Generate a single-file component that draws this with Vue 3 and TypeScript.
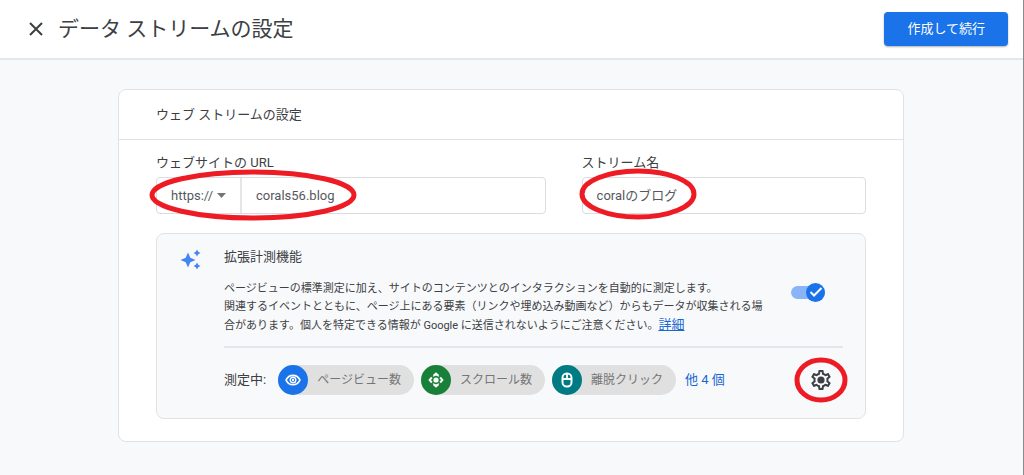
<script setup lang="ts">
import { ref } from 'vue'

interface Metric {
  label: string
  kind: 'view' | 'scroll' | 'click'
}

const protocol = ref('https://')
const siteUrl = ref('corals56.blog')
const streamName = ref('coralのブログ')
const enhanced = ref(true)

const metrics: Metric[] = [
  { label: 'ページビュー数', kind: 'view' },
  { label: 'スクロール数', kind: 'scroll' },
  { label: '離脱クリック', kind: 'click' },
]
</script>

<template>
  <div class="page">
    <header class="topbar">
      <button class="close" type="button" aria-label="閉じる">
        <svg width="14" height="14" viewBox="0 0 14 14">
          <path d="M1 1l12 12M13 1L1 13" fill="none" stroke="#3c4043" stroke-width="2" />
        </svg>
      </button>
      <h1>データ ストリームの設定</h1>
      <button class="submit" type="button">作成して続行</button>
    </header>

    <main class="card">
      <h2>ウェブ ストリームの設定</h2>
      <div class="body">
        <div class="fields">
          <div class="field url">
            <label for="site-url">ウェブサイトの URL</label>
            <div class="box">
              <div class="protocol">
                <select v-model="protocol" aria-label="プロトコル">
                  <option>https://</option>
                  <option>http://</option>
                </select>
                <svg width="9" height="5" viewBox="0 0 9 5"><path d="M0 0h9L4.500 5z" fill="#757575" /></svg>
              </div>
              <input id="site-url" v-model="siteUrl" type="text" />
              <svg class="ring ring-url" width="208" height="54" viewBox="0 0 208 54">
                <ellipse cx="104" cy="27" rx="101" ry="23" />
              </svg>
            </div>
          </div>
          <div class="field name">
            <label for="stream-name">ストリーム名</label>
            <div class="box">
              <input id="stream-name" v-model="streamName" type="text" />
              <svg class="ring ring-name" width="118" height="52" viewBox="0 0 118 52">
                <ellipse cx="59" cy="26" rx="56" ry="23" />
              </svg>
            </div>
          </div>
        </div>

        <section class="panel">
          <svg class="spark" width="22" height="22" viewBox="0 0 22 22" fill="#4285f4">
            <path d="M8 3.500l2.300 5.200L15.500 11l-5.200 2.300L8 18.500l-2.300-5.200L.5 11l5.200-2.300z" />
            <path d="M17 .5l1.200 2.300L20.500 4l-2.300 1.200L17 7.500l-1.200-2.300L13.500 4l2.300-1.200zM17 13.500l1.200 2.300 2.300 1.200-2.300 1.200L17 20.500l-1.200-2.300-2.300-1.200 2.300-1.200z" />
          </svg>
          <div class="content">
            <h3 id="enhanced-title">拡張計測機能</h3>
            <div class="intro">
              <p>
                ページビューの標準測定に加え、サイトのコンテンツとのインタラクションを自動的に測定します。<br />
                関連するイベントとともに、ページ上にある要素（リンクや埋め込み動画など）からもデータが収集される場<br />
                合があります。個人を特定できる情報が Google に送信されないようにご注意ください。<a href="#">詳細</a>
              </p>
              <label class="switch">
                <input v-model="enhanced" type="checkbox" role="switch" aria-labelledby="enhanced-title" />
                <span class="thumb">
                  <svg width="14" height="12" viewBox="0 0 14 12">
                    <path d="M1.500 6l3.500 3.500L12.500 2" fill="none" stroke="#fff" stroke-width="2" />
                  </svg>
                </span>
              </label>
            </div>
            <div class="measuring">
              <span class="caption">測定中:</span>
              <ul>
                <li v-for="m in metrics" :key="m.kind">
                  <span class="badge" :class="m.kind">
                    <svg v-if="m.kind === 'view'" width="16" height="12" viewBox="0 0 16 12" fill="none" stroke="#fff">
                      <path d="M1 6C4-.3 12-.3 15 6C12 12.300 4 12.300 1 6z" stroke-width="1.700" />
                      <circle cx="8" cy="6" r="2.800" stroke-width="1.400" />
                      <circle cx="8" cy="6" r="1.200" fill="#fff" stroke="none" />
                    </svg>
                    <svg v-else-if="m.kind === 'scroll'" width="16" height="16" viewBox="0 0 16 16">
                      <path d="M5.500 3.800L8 1.600l2.500 2.200M12.200 5.500L14.400 8l-2.200 2.500M10.500 12.200L8 14.400l-2.500-2.200M3.800 10.500L1.600 8l2.200-2.500" fill="none" stroke="#fff" stroke-width="1.900" />
                      <path d="M4.800 4.800l1.500-1.300h3.400l1.500 1.300M4.800 11.200l1.500 1.300h3.400l1.500-1.300" fill="none" stroke="#fff" stroke-width=".8" />
                      <circle cx="8" cy="8" r="2.600" fill="#fff" />
                    </svg>
                    <svg v-else width="12" height="16" viewBox="0 0 12 16" fill="none" stroke="#fff">
                      <rect x="1.500" y="1.500" width="9" height="13" rx="4.200" stroke-width="2" />
                      <path d="M1.500 7h9M6 1.500V7" stroke-width="1.800" />
                    </svg>
                  </span>
                  <span class="chip-label">{{ m.label }}</span>
                </li>
              </ul>
              <a class="more" href="#">他 4 個</a>
              <button class="settings" type="button" aria-label="設定">
                <svg width="24" height="24" viewBox="0 0 24 24" fill="#3c4043">
                  <path d="M19.430 12.980c.04-.32.07-.64.07-.98 0-.34-.03-.66-.07-.98l2.110-1.650c.19-.15.24-.42.12-.64l-2-3.460c-.09-.16-.26-.25-.44-.25-.06 0-.12.01-.17.03l-2.490 1c-.52-.4-1.080-.73-1.690-.98l-.38-2.650C14.460 2.180 14.250 2 14 2h-4c-.25 0-.46.18-.49.42l-.38 2.650c-.61.25-1.170.59-1.690.98l-2.490-1c-.06-.02-.12-.03-.18-.03-.17 0-.34.09-.43.25l-2 3.460c-.13.22-.07.49.12.64l2.110 1.650c-.04.32-.07.65-.07.98 0 .33.03.66.07.98l-2.110 1.650c-.19.15-.24.42-.12.64l2 3.460c.09.16.26.25.44.25.06 0 .12-.01.17-.03l2.490-1c.52.4 1.080.73 1.690.98l.38 2.650c.03.24.24.42.49.42h4c.25 0 .46-.18.49-.42l.38-2.650c.61-.25 1.170-.59 1.690-.98l2.490 1c.06.02.12.03.18.03.17 0 .34-.09.43-.25l2-3.460c.12-.22.07-.49-.12-.64l-2.110-1.650zm-1.980-1.710c.04.31.05.52.05.73 0 .21-.02.43-.05.73l-.14 1.130.89.7 1.080.84-.7 1.210-1.270-.51-1.040-.42-.9.68c-.43.32-.84.56-1.250.73l-1.060.43-.16 1.130-.2 1.350h-1.400l-.19-1.350-.16-1.130-1.060-.43c-.43-.18-.83-.41-1.230-.71l-.91-.7-1.060.43-1.270.51-.7-1.210 1.080-.84.89-.7-.14-1.130c-.03-.31-.05-.54-.05-.74s.02-.43.05-.73l.14-1.130-.89-.7-1.080-.84.7-1.210 1.270.51 1.040.42.9-.68c.43-.32.84-.56 1.250-.73l1.060-.43.16-1.130.2-1.350h1.390l.19 1.350.16 1.130 1.060.43c.43.18.83.41 1.230.71l.91.7 1.060-.43 1.270-.51.7 1.210-1.070.85-.89.7.14 1.130z" />
                  <circle cx="12" cy="12" r="3.600" />
                </svg>
                <svg class="ring ring-gear" width="54" height="46" viewBox="0 0 54 46">
                  <ellipse cx="27" cy="23" rx="24" ry="20" />
                </svg>
              </button>
            </div>
          </div>
        </section>
      </div>
    </main>
  </div>
</template>

<style>
body {
  margin: 0;
}
</style>

<style scoped>
.page {
  box-sizing: border-box;
  min-height: 100vh;
  padding-bottom: 32px;
  border-right: 1px solid #8a8b8d;
  background: #f8f9fb;
  color: #3c4043;
  font-family: Roboto, "Noto Sans CJK JP", sans-serif;
  font-size: 13px;
  line-height: 20px;
}
button,
input,
select {
  font: inherit;
  color: inherit;
}
button {
  padding: 0;
  border: 0;
  background: none;
}
h1,
h2,
h3,
p,
ul {
  margin: 0;
  padding: 0;
  font-weight: 400;
}
a {
  color: #1967d2;
}
.topbar {
  display: flex;
  align-items: center;
  height: 58px;
  padding: 0 15px 0 29px;
  border-bottom: 2px solid #e4e6e9;
  background: #fff;
}
.close,
.settings {
  display: flex;
}
h1 {
  flex: 1;
  margin-left: 15px;
  font-size: 21px;
  line-height: 30px;
}
.submit {
  height: 34px;
  padding: 0 23px;
  border-radius: 4px;
  background: #1a73e8;
  box-shadow: 0 1px 2px #3c404366;
  color: #fff;
}
.card {
  margin: 29px 119px 0 118px;
  border: 1px solid #e0e2e6;
  border-radius: 8px;
  background: #fff;
}
h2 {
  padding: 15px 37px 14px;
  border-bottom: 1px solid #e0e2e6;
  font-size: 13px;
}
.body {
  padding: 13px 37px 22px;
}
.fields {
  display: flex;
  gap: 36px;
}
.field {
  display: flex;
  flex-direction: column;
  gap: 4px;
  min-width: 0;
}
.url {
  flex: 389;
}
.name {
  flex: 284;
}
.box {
  position: relative;
  display: flex;
  height: 35px;
  border: 1px solid #dadce0;
  border-radius: 4px;
}
.protocol {
  display: flex;
  align-items: center;
  padding: 0 14px;
  border-right: 2px solid #e4e6e9;
  color: #55595e;
}
.protocol select {
  padding: 0;
  padding-right: 3px;
  border: 0;
  background: none;
  appearance: none;
}
.box input {
  flex: 1;
  min-width: 0;
  padding: 0 14px;
  border: 0;
  background: none;
  color: #55595e;
}
.ring {
  position: absolute;
  fill: none;
  stroke: #ed1c24;
  stroke-width: 5px;
  pointer-events: none;
}
.ring-url {
  top: -10px;
  left: -8px;
}
.ring-name {
  top: -10px;
  left: -4px;
}
.ring-gear {
  top: -11px;
  left: -15px;
}
.panel {
  display: flex;
  margin-top: 19px;
  padding: 13px 22px 23px 23px;
  border: 1px solid #e0e2e6;
  border-radius: 8px;
  background: #f8f9fb;
}
.spark {
  flex: none;
  margin-top: 2px;
}
.content {
  flex: 1;
  min-width: 0;
  margin-left: 22px;
}
h3 {
  font-size: 13px;
}
.intro {
  display: flex;
  align-items: center;
  justify-content: space-between;
  padding: 13px 18px 11px 0;
  border-bottom: 2px solid #e4e6e9;
}
p {
  font-size: 11px;
  line-height: 18px;
}
p a {
  font-size: 13px;
}
.switch {
  position: relative;
  display: flex;
  align-items: center;
  margin-bottom: 31px;
}
.switch input {
  width: 34px;
  height: 13px;
  margin: 0;
  border-radius: 7px;
  background: #dadce0;
  appearance: none;
}
.switch input:checked {
  background: #8ab4f8;
}
.thumb {
  position: absolute;
  left: 0;
  display: flex;
  align-items: center;
  justify-content: center;
  width: 19px;
  height: 19px;
  border-radius: 50%;
  background: #80868b;
}
.switch input:checked + .thumb {
  right: 0;
  left: auto;
  background: #1a73e8;
}
.measuring {
  display: flex;
  align-items: center;
  margin-top: 17px;
}
ul {
  display: flex;
  gap: 7px;
  margin: 0 9px 0 12px;
  list-style: none;
}
li {
  display: flex;
  align-items: center;
  padding-right: 13px;
  border-radius: 15px;
  background: #e0e0e0;
  color: #757575;
  font-size: 12px;
}
.badge {
  display: flex;
  align-items: center;
  justify-content: center;
  width: 30px;
  height: 30px;
  margin-right: 9px;
  border-radius: 50%;
}
.view {
  background: #1a73e8;
}
.scroll {
  background: #188038;
}
.click {
  background: #007b83;
}
.more {
  text-decoration: none;
}
.settings {
  position: relative;
  margin-right: 10px;
  margin-left: auto;
}
</style>
